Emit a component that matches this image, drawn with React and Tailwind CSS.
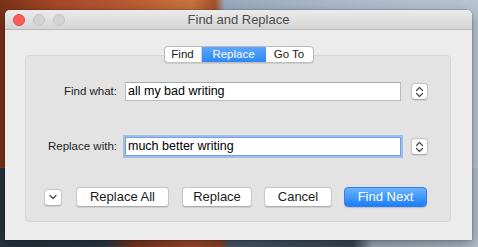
import React from 'react';

const font = { fontFamily: '"Liberation Sans", Arial, sans-serif' };

const Stepper = () => (
  <div className="flex h-[17px] w-[17px] items-center justify-center rounded-[4px] border border-[#c4c4c4] border-b-[#acacac] bg-white shadow-[0_0.5px_1px_rgba(0,0,0,0.08)]">
    <svg width="9" height="12" viewBox="0 0 9 12" fill="none" stroke="#4a4a4a" strokeWidth="1.2" strokeLinecap="round" strokeLinejoin="round">
      <path d="M1.5 4.5 L4.5 1.5 L7.5 4.5" />
      <path d="M1.5 7.5 L4.5 10.5 L7.5 7.5" />
    </svg>
  </div>
);

const PushButton = ({ children, className = '' }) => (
  <button className={`flex h-[20px] items-center justify-center rounded-[4px] border border-[#c8c8c8] border-b-[#adadad] bg-white text-[13px] text-[#1a1a1a] shadow-[0_0.5px_1px_rgba(0,0,0,0.1)] ${className}`}>
    {children}
  </button>
);

const Field = ({ value, focused }) => (
  <div
    className={`flex h-[19px] w-[276px] items-center bg-white pl-[2px] text-[12.5px] text-black ${
      focused
        ? 'border border-[#6ea1e8] shadow-[0_0_0_2px_rgba(110,161,232,0.55)]'
        : 'border border-[#bdbdbd] border-t-[#a9a9a9]'
    }`}
  >
    {value}
  </div>
);

export default function App() {
  return (
    <div
      className="relative h-[247px] w-[478px] overflow-hidden [background:linear-gradient(to_right,#7a3217_0%,#a8482a_12%,#bd5f34_30%,#c9743f_40%,#a4532c_45%,#9aabbf_47%,#aebdce_75%,#b7c4d3_100%)_top/100%_68%_no-repeat,linear-gradient(to_right,#28323f_0%,#2f3846_22%,#7c3520_28%,#a24a29_40%,#8f4426_46%,#4a5868_48%,#3b4756_74%,#9fabb7_78%,#b3bec9_100%)_bottom/100%_32%_no-repeat]"
      style={font}
    >
      {/* window */}
      <div className="absolute left-[5px] top-[10px] flex h-[230px] w-[467px] flex-col overflow-hidden rounded-t-[5px] bg-[#ececec] shadow-[0_0_0_0.5px_rgba(0,0,0,0.25),0_4px_14px_rgba(0,0,0,0.35)]">
        {/* title bar */}
        <div className="relative flex h-[20px] shrink-0 items-center justify-center border-b border-[#bcbcbc] bg-[linear-gradient(#ebebeb,#d5d5d5)]">
          <div className="absolute left-[8px] top-[4px] flex gap-[8px]">
            <span className="h-[12px] w-[12px] rounded-full border border-[#e2463f] bg-[#fc5f57]" />
            <span className="h-[12px] w-[12px] rounded-full border border-[#c4c4c4] bg-[#d3d3d3]" />
            <span className="h-[12px] w-[12px] rounded-full border border-[#c4c4c4] bg-[#d3d3d3]" />
          </div>
          <span className="text-[13px] text-[#4d4d4d]">Find and Replace</span>
        </div>

        {/* body */}
        <div className="flex flex-col pt-[16px]">
          {/* tabs */}
          <div className="relative z-10 mx-auto flex h-[17px] overflow-hidden rounded-[4px] border border-[#bdbdbd] bg-white text-[11.5px] shadow-[0_0.5px_1px_rgba(0,0,0,0.1)]">
            <div className="flex w-[37px] items-center justify-center border-r border-[#cfcfcf] text-[#1a1a1a]">Find</div>
            <div className="flex w-[64px] items-center justify-center bg-[linear-gradient(#5aa6fb,#2f88f7)] text-white">Replace</div>
            <div className="flex w-[47px] items-center justify-center text-[#1a1a1a]">Go To</div>
          </div>

          {/* group box */}
          <div className="ml-[20px] -mt-[8px] flex h-[167px] w-[426px] flex-col rounded-[4px] border border-[#d6d6d6] bg-[#e3e3e3] pt-[26px]">
            <div className="flex items-center">
              <span className="w-[92px] pr-[1px] text-right text-[11.5px] text-[#1f1f1f]">Find what:</span>
              <div className="ml-[7px]">
                <Field value="all my bad writing" />
              </div>
              <div className="ml-[10px]">
                <Stepper />
              </div>
            </div>
            <div className="mt-[36px] flex items-center">
              <span className="w-[92px] pr-[1px] text-right text-[11.5px] text-[#1f1f1f]">Replace with:</span>
              <div className="ml-[7px]">
                <Field value="much better writing" focused />
              </div>
              <div className="ml-[10px]">
                <Stepper />
              </div>
            </div>

            <div className="mt-[31px] flex items-center pl-[18px]">
              <div className="flex h-[17px] w-[18px] items-center justify-center rounded-[4px] border border-[#c8c8c8] border-b-[#adadad] bg-white shadow-[0_0.5px_1px_rgba(0,0,0,0.1)]">
                <svg width="8" height="6" viewBox="0 0 8 6" fill="none" stroke="#4a4a4a" strokeWidth="1.2" strokeLinecap="round" strokeLinejoin="round">
                  <path d="M1 1.5 L4 4.5 L7 1.5" />
                </svg>
              </div>
              <PushButton className="ml-[14px] w-[93px]">Replace All</PushButton>
              <PushButton className="ml-[13px] w-[70px]">Replace</PushButton>
              <PushButton className="ml-[12px] w-[68px]">Cancel</PushButton>
              <button className="ml-[12px] flex h-[20px] w-[83px] items-center justify-center rounded-[4px] border border-[#2d7ff0] bg-[linear-gradient(#6bb2fb,#1c7ff8)] text-[13px] text-white shadow-[0_0.5px_1px_rgba(0,0,0,0.15)]">
                Find Next
              </button>
            </div>
          </div>
        </div>
      </div>
    </div>
  );
}
